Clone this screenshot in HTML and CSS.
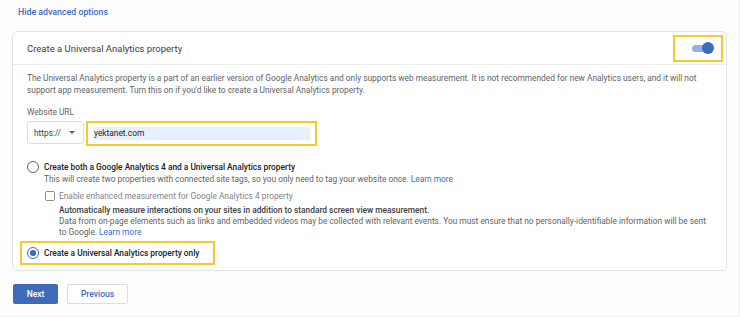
FILE: index.html
```html
<!DOCTYPE html>
<html>
<head>
<meta charset="utf-8">
<link rel="stylesheet" href="styles.css">
</head>
<body>
<div class="page">
  <div class="top"><a class="link-hide">Hide advanced options</a></div>
  <div class="card">
    <div class="card-head">
      <div class="card-title">Create a Universal Analytics property</div>
      <div class="toggle-hl"><div class="toggle"><span class="knob"></span></div></div>
    </div>
    <div class="card-body">
      <p class="desc">The Universal Analytics property is a part of an earlier version of Google Analytics and only supports web measurement. It is not recommended for new Analytics users, and it will not support app measurement. Turn this on if you'd like to create a Universal Analytics property.</p>
      <div class="label">Website URL</div>
      <div class="url-row">
        <div class="select"><span>https://</span><span class="arrow"></span></div>
        <div class="input-hl"><div class="input">yektanet.com</div></div>
      </div>
      <div class="opt opt-both">
        <span class="radio"></span>
        <div class="opt-text">
          <div class="opt-title">Create both a Google Analytics 4 and a Universal Analytics property</div>
          <div class="opt-sub">This will create two properties with connected site tags, so you only need to tag your website once. <a class="lnk">Learn more</a></div>
          <div class="check-row">
            <span class="checkbox"></span>
            <div>
              <div class="check-label">Enable enhanced measurement for Google Analytics 4 property</div>
              <div class="check-bold">Automatically measure interactions on your sites in addition to standard screen view measurement.</div>
              <div class="check-sub">Data from on-page elements such as links and embedded videos may be collected with relevant events. You must ensure that no personally-identifiable information will be sent to Google. <a class="lnk">Learn more</a></div>
            </div>
          </div>
        </div>
      </div>
      <div class="opt-hl">
        <span class="radio checked"></span>
        <span class="opt-title">Create a Universal Analytics property only</span>
      </div>
    </div>
  </div>
  <div class="actions">
    <button class="btn btn-primary">Next</button>
    <button class="btn btn-secondary">Previous</button>
  </div>
</div>
</body>
</html>
```
FILE: styles.css
```css
* { box-sizing: border-box; }
html, body { margin: 0; padding: 0; }
body {
  background: #fdfdfd;
  font-family: Roboto, "Liberation Sans", Arial, sans-serif;
  color: #3c4043;
  width: 740px;
  height: 317px;
  overflow: hidden;
}
.page {
  width: 740px;
  height: 317px;
  border-right: 1px solid #efefef;
  border-bottom: 1px solid #efefef;
  padding: 0 0 0 12px;
}
.top {
  height: 31px;
  padding: 6px 0 0 6px;
  line-height: 12px;
}
.link-hide {
  display: block;
  font-size: 8.8px;
  font-weight: 500;
  color: #3d6cc1;
  line-height: 12px;
}
.card {
  width: 715px;
  height: 240px;
  background: #fff;
  border: 1px solid #e3e3e3;
  border-radius: 5px;
}
.card-head {
  height: 33px;
  border-bottom: 1px solid #ececec;
  display: flex;
  align-items: center;
  justify-content: space-between;
  padding: 0 3px 0 14px;
}
.card-title {
  font-size: 9.5px;
  color: #3c4043;
}
.toggle-hl {
  width: 50px;
  height: 27px;
  border: 2px solid #f8c928;
  display: flex;
  align-items: center;
  justify-content: flex-end;
  padding-right: 9px;
}
.toggle {
  position: relative;
  width: 20px;
  height: 7px;
  border-radius: 4px;
  background: #8fb2e3;
}
.knob {
  position: absolute;
  right: -2px;
  top: -2.5px;
  width: 12px;
  height: 12px;
  border-radius: 50%;
  background: #3b6bbf;
}
.card-body {
  padding: 7px 14px 0 14px;
}
.desc {
  margin: 0;
  font-size: 8.35px;
  line-height: 12px;
  color: #5f6368;
  width: 690px;
}
.label {
  margin-top: 10px;
  font-size: 8.35px;
  line-height: 12px;
  color: #5f6368;
}
.url-row {
  display: flex;
  align-items: flex-start;
  gap: 2px;
  margin-top: 3px;
}
.select {
  width: 57px;
  height: 23px;
  border: 1px solid #dcdcdc;
  border-radius: 3px;
  display: flex;
  align-items: center;
  justify-content: space-between;
  padding: 0 8px 0 6px;
  font-size: 8.35px;
  color: #3c4043;
}
.arrow {
  width: 0;
  height: 0;
  border-left: 3px solid transparent;
  border-right: 3px solid transparent;
  border-top: 3px solid #5f6368;
}
.input-hl {
  width: 231px;
  height: 25px;
  border: 2px solid #f8c928;
  padding: 4px 5px;
}
.input {
  height: 13px;
  background: #e8f0fe;
  font-size: 8.35px;
  line-height: 13px;
  color: #202124;
  padding-left: 1px;
}
.opt {
  display: flex;
  align-items: flex-start;
}
.opt-both {
  margin-top: 15px;
}
.radio {
  flex: none;
  width: 12px;
  height: 12px;
  border: 1.3px solid #5f6368;
  border-radius: 50%;
  margin: 0 5px 0 0;
  position: relative;
}
.radio.checked {
  border-color: #3b6bbf;
}
.radio.checked::after {
  content: "";
  position: absolute;
  left: 2px;
  top: 2px;
  width: 5.5px;
  height: 5.5px;
  border-radius: 50%;
  background: #3b6bbf;
}
.opt-title {
  font-size: 8.35px;
  line-height: 12px;
  font-weight: 500;
  color: #202124;
}
.opt-sub {
  font-size: 8.35px;
  line-height: 12px;
  color: #5f6368;
}
.lnk { color: #3d6cc1; }
.check-row {
  display: flex;
  align-items: flex-start;
  margin-top: 5px;
  margin-left: 1px;
}
.checkbox {
  flex: none;
  width: 10px;
  height: 10px;
  border: 1px solid #8a8d91;
  border-radius: 1.5px;
  margin: 1px 4px 0 0;
}
.check-label {
  font-size: 8.35px;
  line-height: 12px;
  color: #80868b;
}
.check-bold {
  margin-top: 3px;
  font-size: 8.35px;
  line-height: 11px;
  font-weight: 500;
  color: #3c4043;
}
.check-sub {
  font-size: 8.35px;
  line-height: 11px;
  color: #5f6368;
  width: 655px;
}
.opt-hl {
  margin: 3px 0 0 -7px;
  width: 195px;
  height: 24px;
  border: 2px solid #f8c928;
  display: flex;
  align-items: center;
  padding-left: 5px;
}
.actions {
  display: flex;
  gap: 9px;
  margin-top: 13px;
  padding-left: 1px;
}
.btn {
  height: 20px;
  font-family: Roboto, "Liberation Sans", Arial, sans-serif;
  font-size: 8.5px;
  font-weight: 500;
  border-radius: 2px;
  padding: 0;
}
.btn-primary {
  width: 45px;
  background: #3d6bb9;
  color: #fff;
  border: none;
}
.btn-secondary {
  width: 61px;
  background: #fff;
  color: #3d6cc1;
  border: 1px solid #dcdcdc;
}
```
